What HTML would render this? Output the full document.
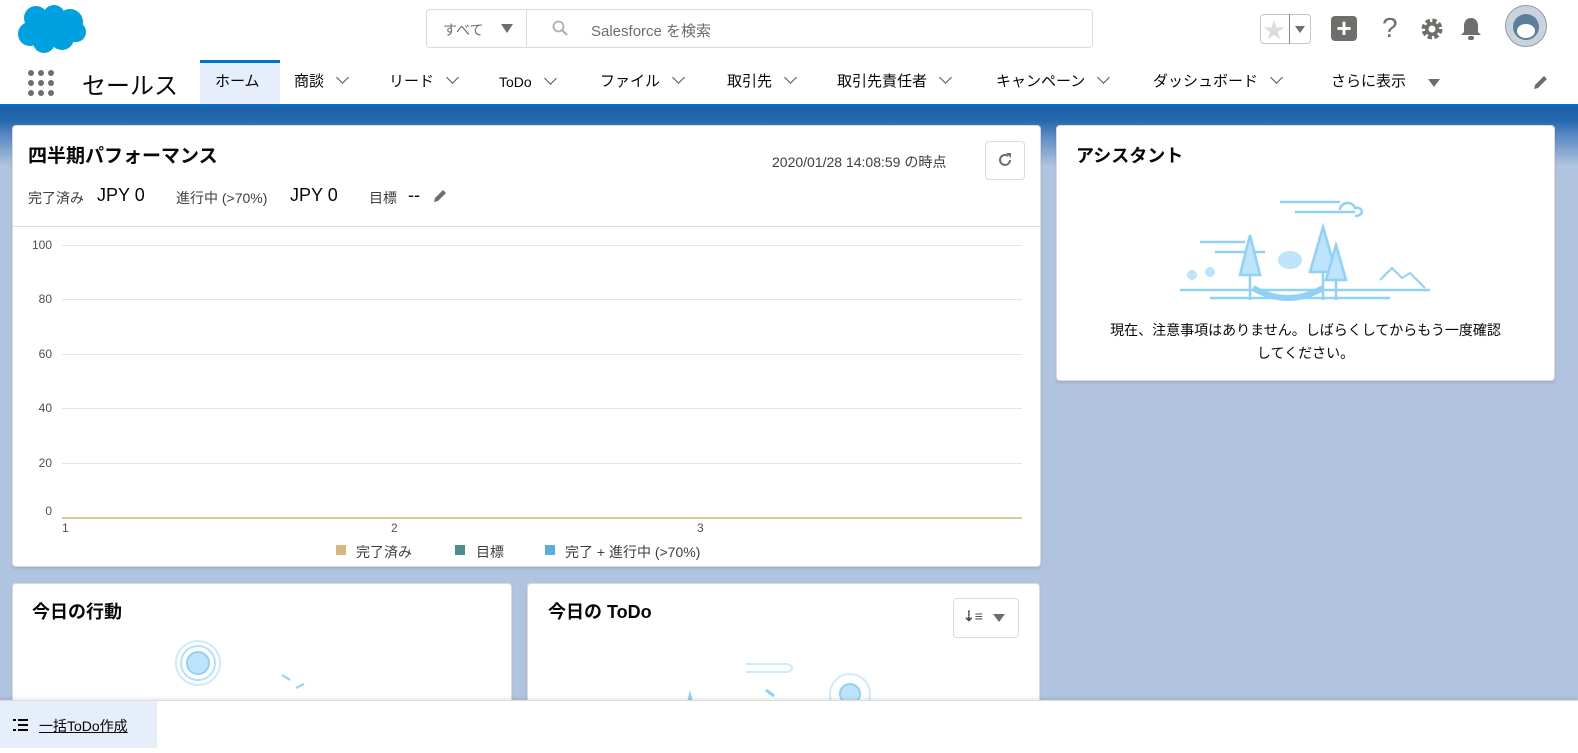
<!DOCTYPE html>
<html><head><meta charset="utf-8"><style>
*{box-sizing:border-box;margin:0;padding:0}
body{width:1578px;height:753px;overflow:hidden;font-family:"Liberation Sans","Noto Sans CJK JP",sans-serif;color:#080707;background:#b0c4df;position:relative}
.abs{position:absolute}
.hdr{left:0;top:0;width:1578px;height:60px;background:#fff}
.nav{left:0;top:60px;width:1578px;height:46px;background:#fff}
.band{left:0;top:106px;width:1578px;height:60px;background:linear-gradient(#1d5fa7 0,#2467ad 14px,#5b8ac4 30px,#b0c4df 60px)}
.card{background:#fff;border-radius:4px;border:1px solid #dddbda;box-shadow:0 2px 2px rgba(0,0,0,.1)}
.t{font-size:14px;color:#3e3e3c}
.navi{position:absolute;top:60px;height:46px;line-height:44px;font-size:15px;color:#080707}
.chev{display:inline-block;width:9px;height:9px;border-right:1.6px solid #555;border-bottom:1.6px solid #555;transform:rotate(45deg);margin-left:14px;position:relative;top:-4px}
.grid{position:absolute;left:62px;width:960px;height:1px;background:#e5e5e5}
.yl{position:absolute;font-size:12px;color:#514f4d;width:22px;text-align:right;left:30px}
</style></head><body>
<div class="abs hdr"></div>
<svg class="abs" style="left:14px;top:4px" width="76" height="50" viewBox="0 0 76 50"><g fill="#00a1e0"><circle cx="22" cy="14" r="12"/><circle cx="40" cy="12" r="11"/><circle cx="56" cy="18" r="13"/><circle cx="16" cy="30" r="12"/><circle cx="30" cy="38" r="11"/><circle cx="48" cy="34" r="12"/><circle cx="62" cy="28" r="10"/><rect x="14" y="16" width="48" height="22"/></g></svg>
<div class="abs" style="left:426px;top:9px;width:667px;height:39px;border:1px solid #dddbda;border-radius:4px;background:#fff"></div>
<div class="abs" style="left:526px;top:10px;width:1px;height:37px;background:#dddbda"></div>
<div class="abs t" style="left:443px;top:20px;color:#706e6b">すべて</div>
<div class="abs" style="left:501px;top:24px;width:0;height:0;border-left:6px solid transparent;border-right:6px solid transparent;border-top:9px solid #706e6b"></div>
<svg class="abs" style="left:552px;top:20px" width="16" height="16"><circle cx="6.5" cy="6.5" r="5" fill="none" stroke="#b0adab" stroke-width="1.8"/><path d="M10 10l5 5" stroke="#b0adab" stroke-width="2"/></svg>
<div class="abs t" style="left:591px;top:20px;color:#706e6b;font-size:15px">Salesforce を検索</div>
<div class="abs" style="left:1260px;top:14px;width:51px;height:30px;border:1px solid #c9c7c5;border-radius:4px"></div>
<div class="abs" style="left:1289px;top:14px;width:1px;height:30px;background:#888"></div>
<div class="abs" style="left:1263px;top:13px;font-size:22px;color:#dcdcdc">★</div>
<div class="abs" style="left:1295px;top:26px;border-left:5px solid transparent;border-right:5px solid transparent;border-top:7px solid #706e6b"></div>
<div class="abs" style="left:1331px;top:16px;width:26px;height:25px;background:#706e6b;border-radius:4px;color:#fff;font-size:26px;line-height:24px;text-align:center;font-weight:bold">+</div>
<div class="abs" style="left:1382px;top:12px;font-size:28px;color:#706e6b">?</div>
<svg class="abs" style="left:1420px;top:17px" width="24" height="24" viewBox="0 0 24 24"><circle cx="12" cy="12" r="8" fill="none" stroke="#706e6b" stroke-width="5" stroke-dasharray="4 2.3"/><circle cx="12" cy="12" r="7" fill="#706e6b"/><circle cx="12" cy="12" r="3.5" fill="#fff"/></svg>
<svg class="abs" style="left:1459px;top:16px" width="24" height="26" viewBox="0 0 24 26"><path d="M12 2c-5 0-7 4-7 8v6l-3 3h20l-3-3v-6c0-4-2-8-7-8z" fill="#706e6b"/><rect x="9" y="20" width="6" height="4" rx="2" fill="#706e6b"/></svg>
<div class="abs" style="left:1505px;top:5px;width:42px;height:42px;border-radius:50%;background:#c8d3df;border:1px solid #999;overflow:hidden"><div style="position:absolute;left:7px;top:8px;width:26px;height:26px;border-radius:50%;background:#5c8099"></div><div style="position:absolute;left:11px;top:18px;width:18px;height:14px;border-radius:50%;background:#fff"></div></div>
<div class="abs nav"></div>
<svg class="abs" style="left:27px;top:69px" width="28" height="28"><g fill="#706e6b"><circle cx="4" cy="4" r="3"/><circle cx="14" cy="4" r="3"/><circle cx="24" cy="4" r="3"/><circle cx="4" cy="14" r="3"/><circle cx="14" cy="14" r="3"/><circle cx="24" cy="14" r="3"/><circle cx="4" cy="24" r="3"/><circle cx="14" cy="24" r="3"/><circle cx="24" cy="24" r="3"/></g></svg>
<div class="abs" style="left:82px;top:66px;font-size:24px;color:#080707">セールス</div>
<div class="abs" style="left:200px;top:60px;width:80px;height:46px;background:#e5eef9;border-top:3px solid #0070d2"></div>
<div class="navi" style="left:215px">ホーム</div>
<div class="navi" style="left:294px">商談<span class="chev"></span></div>
<div class="navi" style="left:389px">リード<span class="chev"></span></div>
<div class="navi" style="left:499px;font-size:14px">ToDo<span class="chev"></span></div>
<div class="navi" style="left:600px">ファイル<span class="chev"></span></div>
<div class="navi" style="left:727px">取引先<span class="chev"></span></div>
<div class="navi" style="left:837px">取引先責任者<span class="chev"></span></div>
<div class="navi" style="left:996px">キャンペーン<span class="chev"></span></div>
<div class="navi" style="left:1153px">ダッシュボード<span class="chev"></span></div>
<div class="navi" style="left:1331px">さらに表示</div>
<div class="abs" style="left:1428px;top:79px;border-left:6px solid transparent;border-right:6px solid transparent;border-top:8px solid #706e6b"></div>
<svg class="abs" style="left:1532px;top:75px" width="16" height="16"><path d="M2 14l1-4 9-9 3 3-9 9z" fill="#706e6b"/></svg>
<div class="abs" style="left:0;top:104px;width:1578px;height:3px;background:#0070d2"></div>
<div class="abs band"></div>
<div class="abs card" style="left:12px;top:125px;width:1029px;height:442px"></div>
<div class="abs" style="left:28px;top:141px;font-size:19px;font-weight:bold">四半期パフォーマンス</div>
<div class="abs" style="left:772px;top:152px;font-size:14px;color:#3e3e3c">2020/01/28 14:08:59 の時点</div>
<div class="abs" style="left:985px;top:141px;width:40px;height:39px;border:1px solid #dddbda;border-radius:4px"></div>
<svg class="abs" style="left:996px;top:151px" width="18" height="18"><path d="M14 9a5 5 0 1 1-2-4" fill="none" stroke="#706e6b" stroke-width="2"/><path d="M10 2h5v5z" fill="#706e6b"/></svg>
<div class="abs" style="left:28px;top:188px;font-size:14px;color:#3e3e3c">完了済み</div>
<div class="abs" style="left:97px;top:185px;font-size:18px">JPY 0</div>
<div class="abs" style="left:176px;top:188px;font-size:14px;color:#3e3e3c">進行中 (>70%)</div>
<div class="abs" style="left:290px;top:185px;font-size:18px">JPY 0</div>
<div class="abs" style="left:369px;top:188px;font-size:14px;color:#3e3e3c">目標</div>
<div class="abs" style="left:408px;top:185px;font-size:18px">--</div>
<svg class="abs" style="left:432px;top:188px" width="16" height="16"><path d="M2 14l1-4 8-8 3 3-8 8z" fill="#706e6b"/></svg>
<div class="abs" style="left:13px;top:226px;width:1027px;height:1px;background:#dddbda"></div>
<div class="grid" style="top:245px"></div><div class="grid" style="top:299px"></div><div class="grid" style="top:354px"></div><div class="grid" style="top:408px"></div><div class="grid" style="top:463px"></div>
<div class="grid" style="top:517px;background:#d8c8a0;height:2px"></div>
<div class="yl" style="top:238px">100</div><div class="yl" style="top:292px">80</div><div class="yl" style="top:347px">60</div><div class="yl" style="top:401px">40</div><div class="yl" style="top:456px">20</div><div class="yl" style="top:504px">0</div>
<div class="abs" style="left:62px;top:521px;font-size:12px;color:#514f4d">1</div>
<div class="abs" style="left:391px;top:521px;font-size:12px;color:#514f4d">2</div>
<div class="abs" style="left:697px;top:521px;font-size:12px;color:#514f4d">3</div>
<div class="abs" style="left:336px;top:545px;width:10px;height:10px;background:#d8b77e"></div>
<div class="abs" style="left:356px;top:542px;font-size:14px;color:#3e3e3c">完了済み</div>
<div class="abs" style="left:455px;top:545px;width:10px;height:10px;background:#4e8b8b"></div>
<div class="abs" style="left:476px;top:542px;font-size:14px;color:#3e3e3c">目標</div>
<div class="abs" style="left:545px;top:545px;width:10px;height:10px;background:#5aaee0"></div>
<div class="abs" style="left:565px;top:542px;font-size:14px;color:#3e3e3c">完了 + 進行中 (>70%)</div>
<div class="abs card" style="left:1056px;top:125px;width:499px;height:256px"></div>
<div class="abs" style="left:1076px;top:142px;font-size:18px;font-weight:bold">アシスタント</div>
<svg class="abs" style="left:1180px;top:180px" width="250" height="125" viewBox="0 0 250 125"><g fill="none" stroke="#8fd1f7" stroke-width="2.5"><path d="M0 110h250M30 118h180"/><path d="M20 62h45M35 72h50M100 22h60M115 32h60"/><path d="M160 30c0-8 12-10 15-2c8-2 10 8 0 8"/></g><g fill="#bde4fb" stroke="#8fd1f7" stroke-width="2.5"><path d="M70 95l-10 0l10-40l10 40z"/><path d="M143 92l-13 0l13-45l13 45z"/><path d="M156 100l-10 0l10-35l10 35z"/></g><path d="M70 95v25M143 92v28M156 100v20" stroke="#8fd1f7" stroke-width="2.5"/><path d="M73 108q35 20 70 0" stroke="#8fd1f7" stroke-width="6" fill="none"/><ellipse cx="110" cy="80" rx="12" ry="9" fill="#bde4fb"/><path d="M200 100l12-12 10 10 8-5 15 15" stroke="#8fd1f7" stroke-width="2" fill="none"/><circle cx="12" cy="95" r="5" fill="#bde4fb"/><circle cx="30" cy="92" r="5" fill="#bde4fb"/></svg>
<div class="abs" style="left:1056px;top:319px;width:499px;text-align:center;font-size:14px;line-height:23px;color:#080707">現在、注意事項はありません。しばらくしてからもう一度確認<br>してください。</div>
<div class="abs card" style="left:12px;top:583px;width:500px;height:140px"></div>
<div class="abs" style="left:32px;top:598px;font-size:18px;font-weight:bold">今日の行動</div>
<svg class="abs" style="left:170px;top:640px" width="160" height="60"><circle cx="28" cy="23" r="22" fill="none" stroke="#cfeafc" stroke-width="2"/><circle cx="28" cy="23" r="17" fill="none" stroke="#b5e0fb" stroke-width="2"/><circle cx="28" cy="23" r="11" fill="#bde4fb" stroke="#8fd1f7" stroke-width="2"/><path d="M112 35l8 5M126 48l8-4" stroke="#8fd1f7" stroke-width="2"/><path d="M160 60l3-10 3 10z" fill="#8fd1f7"/></svg>
<div class="abs card" style="left:527px;top:583px;width:513px;height:140px"></div>
<div class="abs" style="left:548px;top:598px;font-size:18px;font-weight:bold">今日の ToDo</div>
<div class="abs" style="left:953px;top:598px;width:66px;height:40px;border:1px solid #dddbda;border-radius:4px"></div>
<div class="abs" style="left:963px;top:608px;font-size:14px;color:#514f4d;font-weight:bold">⇣≡</div>
<div class="abs" style="left:993px;top:614px;border-left:6px solid transparent;border-right:6px solid transparent;border-top:8px solid #706e6b"></div>
<svg class="abs" style="left:680px;top:658px" width="200" height="44"><path d="M66 6h40c8 0 8 8 0 8h-40" fill="none" stroke="#cfeafc" stroke-width="2"/><circle cx="170" cy="36" r="20" fill="none" stroke="#cfeafc" stroke-width="2"/><circle cx="170" cy="36" r="10" fill="#bde4fb" stroke="#8fd1f7" stroke-width="2"/><path d="M7 44l3-12 3 12z" fill="#8fd1f7"/><path d="M86 32l8 6" stroke="#8fd1f7" stroke-width="3"/></svg>
<div class="abs" style="left:0;top:700px;width:1578px;height:53px;background:#fff;border-top:1px solid #dddbda;box-shadow:0 -2px 3px rgba(0,0,0,.08)"></div>
<div class="abs" style="left:0;top:701px;width:157px;height:47px;background:#e5eef9"></div>
<svg class="abs" style="left:13px;top:718px" width="16" height="14"><g fill="#080707"><rect x="0" y="1" width="3" height="2"/><rect x="5" y="1" width="10" height="2"/><rect x="5" y="6" width="10" height="2"/><rect x="0" y="11" width="3" height="2"/><rect x="5" y="11" width="10" height="2"/></g></svg>
<div class="abs" style="left:39px;top:716px;font-size:14px;text-decoration:underline">一括ToDo作成</div>
</body></html>
